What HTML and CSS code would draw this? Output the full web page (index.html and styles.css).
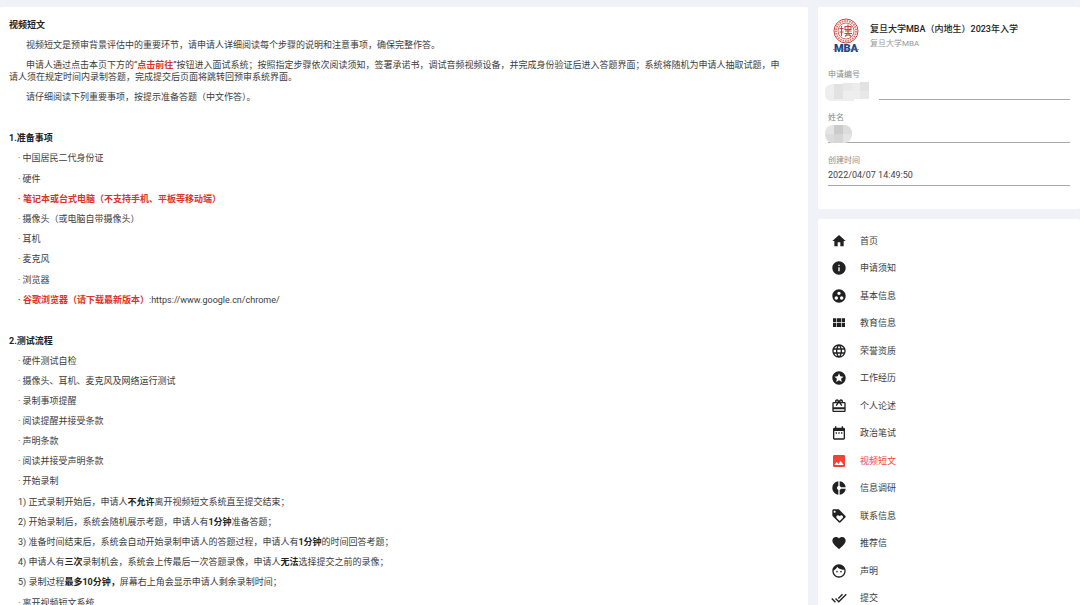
FILE: index.html
```html
<!DOCTYPE html>
<html lang="zh-CN">
<head>
  <meta charset="UTF-8">
  <title>视频短文</title>
  <link rel="stylesheet" href="styles.css">
</head>
<body>
  <div class="page">
    <main class="card content">
      <section>
        <h1>视频短文</h1>
        <p>视频短文是预审背景评估中的重要环节，请申请人详细阅读每个步骤的说明和注意事项，确保完整作答。</p>
        <p>申请人通过点击本页下方的“<strong class="red">点击前往</strong>”按钮进入面试系统；按照指定步骤依次阅读须知，签署承诺书，调试音频视频设备，并完成身份验证后进入答题界面；系统将随机为申请人抽取试题，申请人须在规定时间内录制答题，完成提交后页面将跳转回预审系统界面。</p>
        <p>请仔细阅读下列重要事项，按提示准备答题（中文作答）。</p>
      </section>

      <section>
        <h2>1.准备事项</h2>
        <ul>
          <li>· 中国居民二代身份证</li>
        </ul>
        <ul>
          <li>· 硬件</li>
          <li><strong class="red">· 笔记本或台式电脑（不支持手机、平板等移动端）</strong></li>
          <li>· 摄像头（或电脑自带摄像头）</li>
          <li>· 耳机</li>
          <li>· 麦克风</li>
        </ul>
        <ul>
          <li>· 浏览器</li>
          <li><strong class="red">· 谷歌浏览器（请下载最新版本）</strong>:<a href="https://www.google.cn/chrome/">https://www.google.cn/chrome/</a></li>
        </ul>
      </section>

      <section>
        <h2>2.测试流程</h2>
        <ul>
          <li>· 硬件测试自检</li>
          <li>· 摄像头、耳机、麦克风及网络运行测试</li>
          <li>· 录制事项提醒</li>
          <li>· 阅读提醒并接受条款</li>
          <li>· 声明条款</li>
          <li>· 阅读并接受声明条款</li>
          <li>· 开始录制</li>
        </ul>
        <ul>
          <li>1) 正式录制开始后，申请人<strong>不允许</strong>离开视频短文系统直至提交结束；</li>
          <li>2) 开始录制后，系统会随机展示考题，申请人有<strong>1分钟</strong>准备答题；</li>
          <li>3) 准备时间结束后，系统会自动开始录制申请人的答题过程，申请人有<strong>1分钟</strong>的时间回答考题；</li>
          <li>4) 申请人有<strong>三次</strong>录制机会，系统会上传最后一次答题录像，申请人<strong>无法</strong>选择提交之前的录像；</li>
          <li>5) 录制过程<strong>最多10分钟，</strong>屏幕右上角会显示申请人剩余录制时间；</li>
        </ul>
        <ul>
          <li>· 离开视频短文系统</li>
        </ul>
      </section>
    </main>

    <aside class="sidebar">
      <div class="card profile">
        <header class="project">
          <svg class="logo" viewBox="0 0 28 36" role="img" aria-label="MBA">
            <g fill="none" stroke="#c9453d">
              <circle cx="14" cy="13" r="12" stroke-width="1"/>
              <circle cx="14" cy="13" r="10" stroke-width="2" stroke-dasharray="1.6 .9" opacity=".7"/>
              <circle cx="14" cy="13" r="8" stroke-width=".8"/>
              <path d="M9.5 8v10M7.5 10.5h4M7.5 14h4M13 8.5h6v3h-6zM13 13h6.500M16 6.500v11.500M12.500 15.500h7.500M13 18.500l2-2M19 18.500l-2-2" stroke-width="1.100"/>
            </g>
            <text x="14" y="34" text-anchor="middle">MBA</text>
            <path d="M1 31.5h26" stroke="#c9453d" stroke-width=".6"/>
          </svg>
          <div>
            <h3>复旦大学MBA（内地生）2023年入学</h3>
            <p>复旦大学MBA</p>
          </div>
        </header>
        <div class="field">
          <label for="number">申请编号</label>
          <input id="number" type="text" readonly>
          <svg class="mask mask-wide" viewBox="0 0 54 20" aria-hidden="true">
            <path d="M3 0h51v20H3z" fill="#fff"/>
            <path d="M9 2h35v15H29v2H7q-7 0-7-7V9q0-7 9-7z" fill="#eeeeee"/>
            <path d="M9 2h9v15H9zM35 0h9v9h-9z" fill="#e2e2e2"/>
            <path d="M18 1h9v8h-9zM35 9h9v8h-9z" fill="#e8e8e8"/>
            <path d="M27 1h8v8h-8z" fill="#ececec"/>
          </svg>
        </div>
        <div class="field">
          <label for="name">姓名</label>
          <input id="name" type="text" readonly>
          <svg class="mask mask-small" viewBox="0 0 28 20" aria-hidden="true">
            <rect width="27" height="18" rx="8" fill="#e4e4e4"/>
            <path d="M9 0h9v9H9z" fill="#cbcbcb"/>
            <path d="M0 9h9v9H8q-6-1-8-9zM18 0h2q7 2 7 9h-9z" fill="#dcdcdc"/>
            <path d="M9 9h9v9H9z" fill="#d6d6d6"/>
          </svg>
        </div>
        <div class="field">
          <label for="created">创建时间</label>
          <input id="created" type="text" value="2022/04/07 14:49:50" readonly>
        </div>
      </div>

      <nav class="card">
        <ul class="menu">
          <li><a href="#"><svg viewBox="0 0 24 24"><path d="M10 20v-6h4v6h5v-8h3L12 3 2 12h3v8z"/></svg>首页</a></li>
          <li><a href="#"><svg viewBox="0 0 24 24"><path d="M12 2C6.48 2 2 6.48 2 12s4.48 10 10 10 10-4.48 10-10S17.52 2 12 2zm1 15h-2v-6h2v6zm0-8h-2V7h2v2z"/></svg>申请须知</a></li>
          <li><a href="#"><svg viewBox="0 0 24 24"><path d="M12 2C6.48 2 2 6.48 2 12s4.48 10 10 10 10-4.48 10-10S17.52 2 12 2zM8 17.5c-1.38 0-2.5-1.12-2.5-2.5s1.12-2.5 2.5-2.5 2.5 1.12 2.5 2.5-1.12 2.5-2.5 2.5zM9.5 8c0-1.38 1.12-2.5 2.5-2.5s2.5 1.12 2.5 2.5-1.12 2.5-2.5 2.5S9.5 9.38 9.5 8zm6.5 9.5c-1.38 0-2.5-1.12-2.5-2.5s1.12-2.5 2.5-2.5 2.5 1.12 2.5 2.5-1.12 2.5-2.5 2.5z"/></svg>基本信息</a></li>
          <li><a href="#"><svg viewBox="0 0 24 24"><path d="M3 11h5V5H3v6zm0 7h5v-6H3v6zm6 0h6v-6H9v6zm7 0h5v-6h-5v6zm-7-7h6V5H9v6zm7-6v6h5V5h-5z"/></svg>教育信息</a></li>
          <li><a href="#"><svg viewBox="0 0 24 24"><path d="M11.99 2C6.47 2 2 6.48 2 12s4.47 10 9.99 10C17.52 22 22 17.52 22 12S17.52 2 11.99 2zm6.93 6h-2.95c-.32-1.25-.78-2.45-1.38-3.56 1.84.63 3.37 1.91 4.33 3.56zM12 4.04c.83 1.2 1.48 2.53 1.91 3.96h-3.82c.43-1.43 1.08-2.76 1.91-3.96zM4.26 14C4.1 13.36 4 12.69 4 12s.1-1.36.26-2h3.38c-.08.66-.14 1.32-.14 2 0 .68.06 1.34.14 2H4.26zm.82 2h2.95c.32 1.25.78 2.45 1.38 3.56-1.84-.63-3.37-1.9-4.33-3.56zm2.95-8H5.08c.96-1.66 2.49-2.93 4.33-3.56C8.81 5.55 8.35 6.75 8.03 8zM12 19.96c-.83-1.2-1.48-2.53-1.91-3.96h3.82c-.43 1.43-1.08 2.76-1.91 3.96zM14.34 14H9.66c-.09-.66-.16-1.32-.16-2 0-.68.07-1.35.16-2h4.68c.09.65.16 1.32.16 2 0 .68-.07 1.34-.16 2zm.25 5.56c.6-1.11 1.06-2.31 1.38-3.56h2.95c-.96 1.65-2.49 2.93-4.33 3.56zM16.36 14c.08-.66.14-1.32.14-2 0-.68-.06-1.34-.14-2h3.38c.16.64.26 1.31.26 2s-.1 1.36-.26 2h-3.38z"/></svg>荣誉资质</a></li>
          <li><a href="#"><svg viewBox="0 0 24 24"><path d="M11.99 2C6.47 2 2 6.48 2 12s4.47 10 9.99 10C17.52 22 22 17.52 22 12S17.52 2 11.99 2zm4.24 16L12 15.45 7.77 18l1.12-4.81-3.73-3.23 4.92-.42L12 5l1.92 4.53 4.92.42-3.73 3.23L16.23 18z"/></svg>工作经历</a></li>
          <li><a href="#"><svg viewBox="0 0 24 24"><path d="M20 6h-2.18c.11-.31.18-.65.18-1 0-1.66-1.34-3-3-3-1.05 0-1.96.54-2.5 1.35l-.5.67-.5-.68C10.96 2.54 10.05 2 9 2 7.34 2 6 3.34 6 5c0 .35.07.69.18 1H4c-1.11 0-1.99.89-1.99 2L2 19c0 1.11.89 2 2 2h16c1.11 0 2-.89 2-2V8c0-1.11-.89-2-2-2zm-5-2c.55 0 1 .45 1 1s-.45 1-1 1-1-.45-1-1 .45-1 1-1zM9 4c.55 0 1 .45 1 1s-.45 1-1 1-1-.45-1-1 .45-1 1-1zm11 15H4v-2h16v2zm0-5H4V8h5.08L7 10.83 8.62 12 11 8.76l1-1.36 1 1.36L15.38 12 17 10.83 14.92 8H20v6z"/></svg>个人论述</a></li>
          <li><a href="#"><svg viewBox="0 0 24 24"><path d="M9 11H7v2h2v-2zm4 0h-2v2h2v-2zm4 0h-2v2h2v-2zm2-7h-1V2h-2v2H8V2H6v2H5c-1.11 0-1.99.9-1.99 2L3 20c0 1.1.89 2 2 2h14c1.1 0 2-.9 2-2V6c0-1.1-.9-2-2-2zm0 16H5V9h14v11z"/></svg>政治笔试</a></li>
          <li><a class="active" href="#"><svg viewBox="0 0 24 24"><path d="M21 19V5c0-1.1-.9-2-2-2H5c-1.1 0-2 .9-2 2v14c0 1.1.9 2 2 2h14c1.1 0 2-.9 2-2zM8.5 13.5l2.5 3.01L14.5 12l4.5 6H5l3.5-4.5z"/></svg>视频短文</a></li>
          <li><a href="#"><svg viewBox="0 0 24 24"><path d="M11 9.16V2c-5 .5-9 4.79-9 10s4 9.5 9 10v-7.16c-1-.41-2-1.52-2-2.84s1-2.43 2-2.84zM14.86 11H22c-.48-4.75-4-8.53-9-9v7.16c1 .3 1.52.98 1.86 1.84zM13 14.84V22c5-.47 8.52-4.25 9-9h-7.14c-.34.86-.86 1.54-1.86 1.84z"/></svg>信息调研</a></li>
          <li><a href="#"><svg viewBox="0 0 24 24"><path d="M21.41 11.58l-9-9C12.05 2.22 11.55 2 11 2H4c-1.1 0-2 .9-2 2v7c0 .55.22 1.05.59 1.42l9 9c.36.36.86.58 1.41.58.55 0 1.05-.22 1.41-.59l7-7c.37-.36.59-.86.59-1.41 0-.55-.23-1.06-.59-1.42zM5.5 7C4.67 7 4 6.33 4 5.5S4.67 4 5.5 4 7 4.67 7 5.5 6.33 7 5.5 7zm11.77 8.27L13 19.54l-4.27-4.27C8.28 14.81 8 14.19 8 13.5c0-1.38 1.12-2.5 2.5-2.5.69 0 1.32.28 1.77.74l.73.72.73-.73c.45-.45 1.08-.73 1.77-.73 1.38 0 2.5 1.12 2.5 2.5 0 .69-.28 1.32-.73 1.77z"/></svg>联系信息</a></li>
          <li><a href="#"><svg viewBox="0 0 24 24"><path d="M12 21.35l-1.45-1.32C5.4 15.36 2 12.28 2 8.5 2 5.42 4.42 3 7.5 3c1.74 0 3.41.81 4.5 2.09C13.09 3.81 14.76 3 16.5 3 19.58 3 22 5.42 22 8.5c0 3.78-3.4 6.86-8.55 11.54L12 21.35z"/></svg>推荐信</a></li>
          <li><a href="#"><svg viewBox="0 0 24 24"><path d="M9 11.75c-.69 0-1.25.56-1.25 1.25s.56 1.25 1.25 1.25 1.25-.56 1.25-1.25-.56-1.25-1.25-1.25zm6 0c-.69 0-1.25.56-1.25 1.25s.56 1.25 1.25 1.25 1.25-.56 1.25-1.25-.56-1.25-1.25-1.25zM12 2C6.48 2 2 6.48 2 12s4.48 10 10 10 10-4.48 10-10S17.52 2 12 2zm0 18c-4.41 0-8-3.59-8-8 0-.29.02-.58.05-.86 2.36-1.05 4.23-2.98 5.21-5.37C11.07 8.33 14.05 10 17.42 10c.78 0 1.53-.09 2.25-.26.21.71.33 1.47.33 2.26 0 4.41-3.59 8-8 8z"/></svg>声明</a></li>
          <li><a href="#"><svg viewBox="0 0 24 24"><path d="M18 7l-1.41-1.41-6.34 6.34 1.41 1.41L18 7zm4.24-1.41L11.66 16.17 7.48 12l-1.41 1.41L11.66 19l12-12-1.42-1.41zM.41 13.41L6 19l1.41-1.41L1.83 12 .41 13.41z"/></svg>提交</a></li>
        </ul>
      </nav>
    </aside>
  </div>
</body>
</html>
```
FILE: styles.css
```css
* {
  box-sizing: border-box;
}

html {
  scrollbar-width: none;
}

body {
  margin: 0;
  background: #f1f2f8;
  color: #3c3c3c;
  font-family: Roboto, "Noto Sans CJK SC", sans-serif;
  font-size: 9px;
  line-height: 12px;
}

h1, h2, h3, p, ul {
  margin: 0;
  padding: 0;
  font-size: inherit;
}

ul {
  list-style: none;
}

a {
  color: inherit;
  text-decoration: none;
}

.page {
  display: grid;
  grid-template-columns: 1fr 262px;
  gap: 10px;
  padding-top: 7px;
}

.card {
  background: #fff;
  border-radius: 2px;
}

/* instructions */
.content {
  display: flex;
  flex-direction: column;
  gap: 29px;
  padding: 12px 26px 20px 9px;
}

.content section {
  display: flex;
  flex-direction: column;
  gap: 8px;
}

.content p {
  text-indent: 17px;
}

.content h1,
.content h2 {
  color: #222;
}

.content ul {
  display: flex;
  flex-direction: column;
  gap: 8px;
  padding-left: 9px;
}

.content ul + ul {
  margin-top: 1px;
}

.content strong {
  color: #222;
}

.content .red {
  color: #dc3329;
}

/* applicant info */
.sidebar {
  display: flex;
  flex-direction: column;
  gap: 10px;
}

.profile {
  padding: 11px 10px;
}

.project {
  display: flex;
  gap: 10px;
  padding-left: 4px;
  margin-bottom: 15px;
}

.project > div {
  padding-top: 5px;
}

.project h3 {
  color: #222;
  font-weight: 500;
  margin-bottom: 3px;
}

.project p {
  color: #999;
  font-size: 8px;
  text-indent: 0;
}

.logo {
  width: 28px;
  height: 36px;
}

.logo text {
  fill: #1d4587;
  font-size: 11px;
  font-weight: 900;
}

.field {
  position: relative;
  display: flex;
  flex-direction: column;
  margin-bottom: 12px;
}

.field label {
  color: #8a8a8a;
  font-size: 8px;
}

.field input {
  width: 100%;
  height: 19px;
  padding: 0 0 3px;
  border: none;
  border-bottom: 1px solid #a8a8a8;
  background: none;
  color: #444;
  font-family: inherit;
  font-size: 9px;
  outline: none;
}

/* mosaic over the private values */
.mask {
  position: absolute;
  left: -3px;
  bottom: -2px;
  height: 20px;
}

.mask-wide {
  width: 54px;
}

.mask-small {
  width: 28px;
}

/* menu */
.menu {
  padding: 8px 13px;
}

.menu li:nth-child(even) {
  padding-bottom: 1px;
}

.menu a {
  display: flex;
  align-items: center;
  gap: 13px;
  height: 27px;
}

.menu svg {
  width: 16px;
  height: 16px;
  fill: #212121;
}

.menu .active {
  color: #f44336;
}

.menu .active svg {
  fill: #f44336;
}
```
